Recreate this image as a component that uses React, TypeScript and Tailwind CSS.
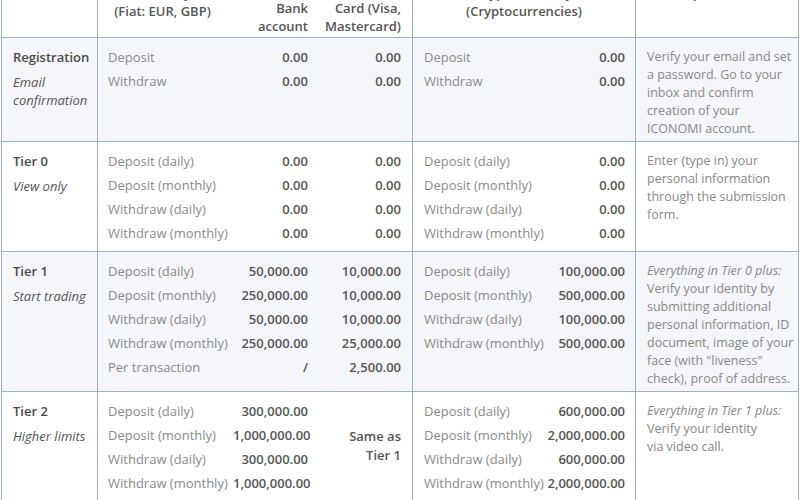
import type { FC, ReactNode } from 'react';

type Line = { label: string; bank: string; card: string };
type CryptoLine = { label: string; value: string };

type Tier = {
    name: string;
    subtitle: ReactNode;
    fiat: Line[];
    cardMerged?: string[];
    crypto: CryptoLine[];
    description: ReactNode;
    shaded: boolean;
};

const tiers: Tier[] = [
    {
        name: 'Registration',
        subtitle: (
            <>
                Email
                <br />
                confirmation
            </>
        ),
        fiat: [
            { label: 'Deposit', bank: '0.00', card: '0.00' },
            { label: 'Withdraw', bank: '0.00', card: '0.00' }
        ],
        crypto: [
            { label: 'Deposit', value: '0.00' },
            { label: 'Withdraw', value: '0.00' }
        ],
        description:
            'Verify your email and set a password. Go to your inbox and confirm creation of your ICONOMI account.',
        shaded: true
    },
    {
        name: 'Tier 0',
        subtitle: 'View only',
        fiat: [
            { label: 'Deposit (daily)', bank: '0.00', card: '0.00' },
            { label: 'Deposit (monthly)', bank: '0.00', card: '0.00' },
            { label: 'Withdraw (daily)', bank: '0.00', card: '0.00' },
            { label: 'Withdraw (monthly)', bank: '0.00', card: '0.00' }
        ],
        crypto: [
            { label: 'Deposit (daily)', value: '0.00' },
            { label: 'Deposit (monthly)', value: '0.00' },
            { label: 'Withdraw (daily)', value: '0.00' },
            { label: 'Withdraw (monthly)', value: '0.00' }
        ],
        description:
            'Enter (type in) your personal information through the submission form.',
        shaded: false
    },
    {
        name: 'Tier 1',
        subtitle: 'Start trading',
        fiat: [
            { label: 'Deposit (daily)', bank: '50,000.00', card: '10,000.00' },
            { label: 'Deposit (monthly)', bank: '250,000.00', card: '10,000.00' },
            { label: 'Withdraw (daily)', bank: '50,000.00', card: '10,000.00' },
            { label: 'Withdraw (monthly)', bank: '250,000.00', card: '25,000.00' },
            { label: 'Per transaction', bank: '/', card: '2,500.00' }
        ],
        crypto: [
            { label: 'Deposit (daily)', value: '100,000.00' },
            { label: 'Deposit (monthly)', value: '500,000.00' },
            { label: 'Withdraw (daily)', value: '100,000.00' },
            { label: 'Withdraw (monthly)', value: '500,000.00' }
        ],
        description: (
            <>
                <em>Everything in Tier 0 plus:</em> Verify your identity by
                submitting additional personal information, ID document, image
                of your face (with "liveness" check), proof of address.
            </>
        ),
        shaded: true
    },
    {
        name: 'Tier 2',
        subtitle: 'Higher limits',
        fiat: [
            { label: 'Deposit (daily)', bank: '300,000.00', card: '' },
            { label: 'Deposit (monthly)', bank: '1,000,000.00', card: '' },
            { label: 'Withdraw (daily)', bank: '300,000.00', card: '' },
            { label: 'Withdraw (monthly)', bank: '1,000,000.00', card: '' }
        ],
        cardMerged: ['Same as', 'Tier 1'],
        crypto: [
            { label: 'Deposit (daily)', value: '600,000.00' },
            { label: 'Deposit (monthly)', value: '2,000,000.00' },
            { label: 'Withdraw (daily)', value: '600,000.00' },
            { label: 'Withdraw (monthly)', value: '2,000,000.00' }
        ],
        description: (
            <>
                <em>Everything in Tier 1 plus:</em>
                <br />
                Verify your identity
                <br />
                via video call.
            </>
        ),
        shaded: false
    }
];

const TierRow: FC<{ tier: Tier }> = ({ tier }) => (
    <div
        className={`flex border-b border-[#9db0c6] ${tier.shaded ? 'bg-[#f4f6f9]' : 'bg-white'}`}
    >
        {/* tier name */}
        <div className="w-[96px] shrink-0 border-r border-[#9db0c6] pl-[11px] pt-[7px] pb-[6px]">
            <div className="font-semibold text-[13px] leading-[24px] text-[#4a4a4a]">
                {tier.name}
            </div>
            <div className="mt-[4px] italic text-[13px] leading-[18px] text-[#555]">
                {tier.subtitle}
            </div>
        </div>

        {/* fiat */}
        <div className="w-[315px] shrink-0 border-r border-[#9db0c6] pl-[10px] pr-[11px] pt-[7px] pb-[6px]">
            <div className="grid grid-cols-[125px_75px_93px] auto-rows-[24px] text-[13px] leading-[24px]">
                {tier.fiat.map((line, i) => (
                    <div key={line.label} className="contents">
                        <div className="text-[#8a8a8a] whitespace-nowrap">
                            {line.label}
                        </div>
                        <div className="text-right font-semibold text-[#555] whitespace-nowrap">
                            {line.bank}
                        </div>
                        {tier.cardMerged ? (
                            i === 0 && (
                                <div className="row-span-4 self-center text-right font-semibold text-[#555] leading-[19px] -mt-[2px]">
                                    {tier.cardMerged[0]}
                                    <br />
                                    {tier.cardMerged[1]}
                                </div>
                            )
                        ) : (
                            <div className="text-right font-semibold text-[#555]">
                                {line.card}
                            </div>
                        )}
                    </div>
                ))}
            </div>
        </div>

        {/* crypto */}
        <div className="w-[223px] shrink-0 border-r border-[#9db0c6] pl-[11px] pr-[10px] pt-[7px] pb-[6px]">
            <div className="grid grid-cols-[1fr_auto] auto-rows-[24px] text-[13px] leading-[24px]">
                {tier.crypto.map((line) => (
                    <div key={line.label} className="contents">
                        <div className="text-[#8a8a8a] whitespace-nowrap">
                            {line.label}
                        </div>
                        <div className="text-right font-semibold text-[#555]">
                            {line.value}
                        </div>
                    </div>
                ))}
            </div>
        </div>

        {/* requirements */}
        <div className="w-[163px] shrink-0 border-r border-[#9db0c6] pl-[11px] pr-[1px] pt-[10px] pb-[3px] text-[12.5px] leading-[18px] text-[#888]">
            {tier.description}
        </div>
    </div>
);

const App: FC = () => {
    return (
        <div
            className="w-[800px] h-[500px] overflow-hidden bg-white"
            style={{ fontFamily: '"Open Sans", "Noto Sans", sans-serif' }}
        >
            <div className="-mt-[18px] ml-[1px] w-[798px] border-l border-[#9db0c6]">
                {/* header, its first line runs off the top of the page */}
                <div className="flex h-[56px] border-b border-[#9db0c6] bg-white font-semibold text-[13px] leading-[18px] text-[#555]">
                    <div className="w-[96px] shrink-0 border-r border-[#9db0c6] flex flex-col justify-end pl-[11px] pb-[38px]">
                        Tier
                    </div>
                    <div className="w-[315px] shrink-0 border-r border-[#9db0c6] pr-[11px]">
                        <div className="grid grid-cols-[135px_75px_93px] h-full">
                            <div className="flex flex-col justify-end items-center pb-[17px] pr-[6px] text-center">
                                <span>Currency</span>
                                <span>(Fiat: EUR, GBP)</span>
                            </div>
                            <div className="flex flex-col justify-end items-end pb-[2px]">
                                <span>Bank</span>
                                <span>account</span>
                            </div>
                            <div className="flex flex-col justify-end items-end pb-[2px]">
                                <span>Card (Visa,</span>
                                <span>Mastercard)</span>
                            </div>
                        </div>
                    </div>
                    <div className="w-[223px] shrink-0 border-r border-[#9db0c6] flex flex-col justify-end items-center pb-[17px]">
                        <span>Cryptocurrency</span>
                        <span>(Cryptocurrencies)</span>
                    </div>
                    <div className="w-[163px] shrink-0 border-r border-[#9db0c6] flex flex-col justify-end items-center pb-[35px]">
                        <span>Requirements</span>
                    </div>
                </div>

                {tiers.map((tier) => (
                    <TierRow key={tier.name} tier={tier} />
                ))}
            </div>
        </div>
    );
};

export default App;
